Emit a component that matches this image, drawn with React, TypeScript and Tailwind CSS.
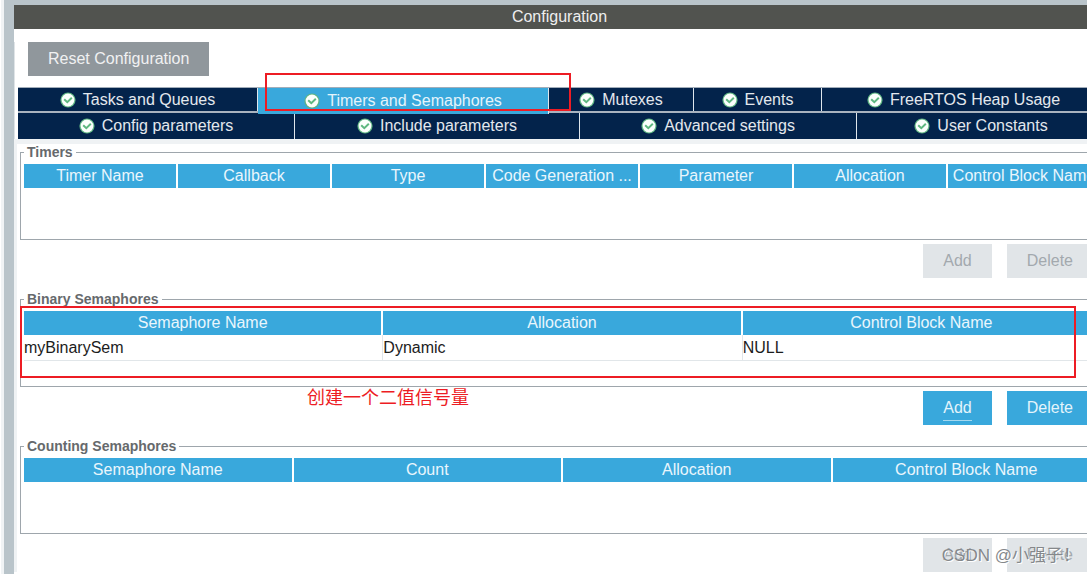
import { useState, type ReactNode } from "react";

type Tab = { id: string; label: string };

const upperTabs: Tab[] = [
  { id: "tasks", label: "Tasks and Queues" },
  { id: "timers", label: "Timers and Semaphores" },
  { id: "mutexes", label: "Mutexes" },
  { id: "events", label: "Events" },
  { id: "heap", label: "FreeRTOS Heap Usage" },
];

const lowerTabs: Tab[] = [
  { id: "config", label: "Config parameters" },
  { id: "include", label: "Include parameters" },
  { id: "advanced", label: "Advanced settings" },
  { id: "constants", label: "User Constants" },
];

const timerColumns = ["Timer Name", "Callback", "Type", "Code Generation ...", "Parameter", "Allocation", "Control Block Name"];
const binaryColumns = ["Semaphore Name", "Allocation", "Control Block Name"];
const countingColumns = ["Semaphore Name", "Count", "Allocation", "Control Block Name"];

const binaryRows = [["myBinarySem", "Dynamic", "NULL"]];

function CheckIcon() {
  return (
    <svg viewBox="0 0 16 16" className="h-4 w-4 shrink-0" aria-hidden="true">
      <circle cx="8" cy="8" r="7.6" fill="#5fb583" />
      <circle cx="8" cy="8" r="6.4" fill="#fbfffc" />
      <path d="M4.2 7.2 7.3 10.2 11.8 5.8" fill="none" stroke="#5fb880" strokeWidth="2" />
    </svg>
  );
}

type TabButtonProps = { tab: Tab; active: boolean; onSelect: (id: string) => void; children?: ReactNode };

function TabButton({ tab, active, onSelect, children }: TabButtonProps) {
  return (
    <button
      type="button"
      role="tab"
      aria-selected={active}
      onClick={() => onSelect(tab.id)}
      className={`relative flex items-center justify-center gap-[7px] whitespace-nowrap border-r border-[#dfe6ec] leading-5 last:border-r-0 ${
        active ? "z-10 -mb-[3px] bg-[#39a8dc] pb-px text-[#e4f4fb]" : "bg-[#03234b] text-[#e3e8ee]"
      }`}
    >
      <CheckIcon />
      {tab.label}
      {children}
    </button>
  );
}

function DataTable({ label, columns, rows = [] }: { label: string; columns: string[]; rows?: string[][] }) {
  return (
    <table aria-label={label} className="w-full table-fixed border-separate border-spacing-0">
      <thead>
        <tr>
          {columns.map((column) => (
            <th key={column} className="h-6 truncate border-r-2 border-white bg-[#39a8dc] p-0 text-center font-normal leading-6 text-[#eaf6fc]">
              {column}
            </th>
          ))}
        </tr>
      </thead>
      <tbody>
        {rows.map((row) => (
          <tr key={row[0]}>
            {row.map((cell, i) => (
              <td key={i} className="border-r border-b border-[#e1e6e9] p-0 pt-px leading-6 text-[#1c1c1c]">
                {cell}
              </td>
            ))}
          </tr>
        ))}
      </tbody>
    </table>
  );
}

type SectionProps = { title: string; enabled?: boolean; note?: ReactNode; children: ReactNode };

function Section({ title, enabled = false, note, children }: SectionProps) {
  const buttonStyle = enabled ? "bg-[#39a8dc] text-[#e4f4fb]" : "bg-[#e1e5e8] text-[#a3a9ae]";

  return (
    <section className="relative ml-[2px] mb-[13px]">
      <fieldset className="min-h-24 border border-[#9ea6ac] pt-1 pr-[2px] pl-[3px]">
        <legend className="px-[3px] text-sm leading-4 font-bold text-[#66696c]">{title}</legend>
        {children}
      </fieldset>
      <div className="mt-1 mr-3 flex justify-end gap-[15px]">
        <button type="button" disabled={!enabled} className={`h-[34px] px-5 ${buttonStyle}`}>
          <span className={`block border-b ${enabled ? "border-[#a5d8ef]" : "border-transparent"}`}>Add</span>
        </button>
        <button type="button" disabled={!enabled} className={`h-[34px] px-5 ${buttonStyle}`}>
          Delete
        </button>
      </div>
      {note}
    </section>
  );
}

export default function App() {
  const [selected, setSelected] = useState("timers");

  return (
    <div className="relative flex h-screen overflow-hidden bg-white font-['Liberation_Sans','Noto_Sans_CJK_SC',sans-serif] text-base">
      <div className="ml-px w-[13px] shrink-0 border-l-[3px] border-[#f0f3f5] bg-[#b9c4ca]" />
      <main className="min-w-0 flex-1 bg-white">
        {/* the pane runs a little past the right edge of the window */}
        <div className="w-[calc(100%+18px)]">
          <header className="border-t-[5px] border-[#b9c4ca]">
            <h1 className="bg-[#51534f] text-center leading-6 text-[#eeeeee]">Configuration</h1>
          </header>

          <div className="border-l border-[#dfe4e7] pl-[3px]">
            <button type="button" className="mt-[13px] mb-[11px] ml-[10px] block h-[34px] bg-[#90979c] px-5 text-[#f0f1f2]">
              Reset Configuration
            </button>

            <div role="tablist" aria-label="Configuration">
              <div className="grid h-[26px] grid-cols-[240fr_291fr_145fr_128fr_283fr] border-t border-b-2 border-t-[#a2adb9] border-b-[#a9b3bf]">
                {upperTabs.map((tab) => (
                  <TabButton key={tab.id} tab={tab} active={selected === tab.id} onSelect={setSelected}>
                    {tab.id === "timers" && (
                      <span className="pointer-events-none absolute -top-[15px] -right-[23px] bottom-[3px] left-[7px] border-2 border-[#ed1c24]" />
                    )}
                  </TabButton>
                ))}
              </div>
              <div className="grid h-[26px] grid-cols-[277fr_285fr_277fr_248fr]">
                {lowerTabs.map((tab) => (
                  <TabButton key={tab.id} tab={tab} active={selected === tab.id} onSelect={setSelected} />
                ))}
              </div>
            </div>
          </div>

          <div className="border-l-[3px] border-[#eff2f4] pl-px">
            <div className="-ml-px h-[5px] bg-[#eff2f4]" />
            <Section title="Timers">
              <DataTable label="Timers" columns={timerColumns} />
            </Section>
            <Section
              title="Binary Semaphores"
              enabled
              note={
                <>
                  <div className="pointer-events-none absolute top-[15px] right-[29px] left-0 h-[72px] border-2 border-[#ed1c24]" />
                  <p className="absolute top-[95px] left-[287px] text-lg leading-6 text-[#ed1c24]">创建一个二值信号量</p>
                </>
              }
            >
              <DataTable label="Binary Semaphores" columns={binaryColumns} rows={binaryRows} />
            </Section>
            <Section title="Counting Semaphores">
              <DataTable label="Counting Semaphores" columns={countingColumns} />
            </Section>
          </div>
        </div>
      </main>
      <p className="pointer-events-none absolute right-[7px] bottom-[6px] text-[17px] leading-6 text-[#85888b] [text-shadow:1px_1px_0_#ffffff]">CSDN @小强子！</p>
    </div>
  );
}
